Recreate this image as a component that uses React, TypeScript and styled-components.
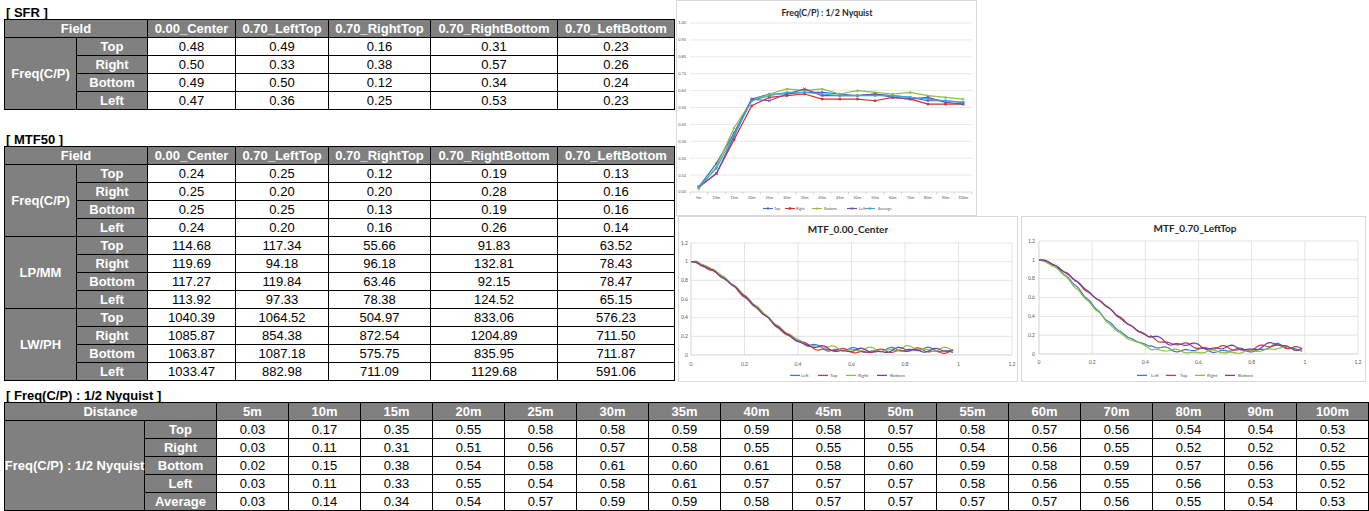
import React from "react";
import styled, { createGlobalStyle } from "styled-components";

const GlobalStyle = createGlobalStyle`
  html, body { margin: 0; padding: 0; background: #fff; }
  body { font-family: "Liberation Sans", Arial, sans-serif; }
`;

/* ---------- data ---------- */
const FIELDS = ["0.00_Center", "0.70_LeftTop", "0.70_RightTop", "0.70_RightBottom", "0.70_LeftBottom"];
const DIRS = ["Top", "Right", "Bottom", "Left"];

const SFR: string[][] = [
  ["0.48", "0.49", "0.16", "0.31", "0.23"],
  ["0.50", "0.33", "0.38", "0.57", "0.26"],
  ["0.49", "0.50", "0.12", "0.34", "0.24"],
  ["0.47", "0.36", "0.25", "0.53", "0.23"],
];

const MTF50: { group: string; rows: string[][] }[] = [
  {
    group: "Freq(C/P)",
    rows: [
      ["0.24", "0.25", "0.12", "0.19", "0.13"],
      ["0.25", "0.20", "0.20", "0.28", "0.16"],
      ["0.25", "0.25", "0.13", "0.19", "0.16"],
      ["0.24", "0.20", "0.16", "0.26", "0.14"],
    ],
  },
  {
    group: "LP/MM",
    rows: [
      ["114.68", "117.34", "55.66", "91.83", "63.52"],
      ["119.69", "94.18", "96.18", "132.81", "78.43"],
      ["117.27", "119.84", "63.46", "92.15", "78.47"],
      ["113.92", "97.33", "78.38", "124.52", "65.15"],
    ],
  },
  {
    group: "LW/PH",
    rows: [
      ["1040.39", "1064.52", "504.97", "833.06", "576.23"],
      ["1085.87", "854.38", "872.54", "1204.89", "711.50"],
      ["1063.87", "1087.18", "575.75", "835.95", "711.87"],
      ["1033.47", "882.98", "711.09", "1129.68", "591.06"],
    ],
  },
];

const DISTANCES = ["5m", "10m", "15m", "20m", "25m", "30m", "35m", "40m", "45m", "50m", "55m", "60m", "70m", "80m", "90m", "100m"];

const NYQ: { label: string; values: number[] }[] = [
  { label: "Top", values: [0.03, 0.17, 0.35, 0.55, 0.58, 0.58, 0.59, 0.59, 0.58, 0.57, 0.58, 0.57, 0.56, 0.54, 0.54, 0.53] },
  { label: "Right", values: [0.03, 0.11, 0.31, 0.51, 0.56, 0.57, 0.58, 0.55, 0.55, 0.55, 0.54, 0.56, 0.55, 0.52, 0.52, 0.52] },
  { label: "Bottom", values: [0.02, 0.15, 0.38, 0.54, 0.58, 0.61, 0.6, 0.61, 0.58, 0.6, 0.59, 0.58, 0.59, 0.57, 0.56, 0.55] },
  { label: "Left", values: [0.03, 0.11, 0.33, 0.55, 0.54, 0.58, 0.61, 0.57, 0.57, 0.57, 0.58, 0.56, 0.55, 0.56, 0.53, 0.52] },
  { label: "Average", values: [0.03, 0.14, 0.34, 0.54, 0.57, 0.59, 0.59, 0.58, 0.57, 0.57, 0.57, 0.57, 0.56, 0.55, 0.54, 0.53] },
];

/* ---------- layout ---------- */
const Page = styled.div`
  padding-left: 4px;
  width: 1365px;
`;

const TopSection = styled.div`
  display: flex;
  align-items: flex-start;
  height: 380px;
`;

const LeftColumn = styled.div`
  flex: none;
  width: 672px;
`;

const SectionTitle = styled.div<{ $space: number }>`
  box-sizing: border-box;
  height: ${(p) => p.$space}px;
  padding-left: 2px;
  display: flex;
  align-items: flex-end;
  font-size: 13px;
  font-weight: bold;
  line-height: 13px;
  color: #000;
  white-space: nowrap;
`;

const Grid = styled.div<{ $cols: string }>`
  display: grid;
  grid-template-columns: ${(p) => p.$cols};
  grid-auto-rows: 18px;
  width: max-content;
  border-top: 1px solid #000;
  border-left: 1px solid #000;
  font-size: 13px;
`;

const Cell = styled.div<{ $head?: boolean; $span?: number; $rows?: number }>`
  box-sizing: border-box;
  border-right: 1px solid #000;
  border-bottom: 1px solid #000;
  display: flex;
  align-items: center;
  justify-content: center;
  white-space: nowrap;
  line-height: 1;
  background: ${(p) => (p.$head ? "#808080" : "#fff")};
  color: ${(p) => (p.$head ? "#fff" : "#000")};
  font-weight: ${(p) => (p.$head ? "bold" : "normal")};
  grid-column: span ${(p) => p.$span ?? 1};
  grid-row: span ${(p) => p.$rows ?? 1};
`;

const ChartColumn = styled.div`
  display: flex;
  flex-direction: column;
`;

const ChartRow = styled.div`
  display: flex;
  gap: 3px;
  margin-left: 2px;
`;

const ChartFrame = styled.div<{ $w: number; $h: number }>`
  box-sizing: border-box;
  flex: none;
  width: ${(p) => p.$w}px;
  height: ${(p) => p.$h}px;
  border: 1px solid #d9d9d9;
  background: #fff;
`;

const ChartSvg = styled.svg`
  display: block;
  font-family: Lato, "Liberation Sans", sans-serif;
`;

/* ---------- tables ---------- */
const TOP_COLS = "72px 71px 88px 93px 102px 127px 117px";

function SfrTable() {
  return (
    <Grid $cols={TOP_COLS}>
      <Cell $head $span={2}>Field</Cell>
      {FIELDS.map((f) => (
        <Cell key={f} $head>{f}</Cell>
      ))}
      {SFR.map((row, i) => (
        <React.Fragment key={i}>
          {i === 0 && <Cell $head $rows={4}>Freq(C/P)</Cell>}
          <Cell $head>{DIRS[i]}</Cell>
          {row.map((v, j) => (
            <Cell key={j}>{v}</Cell>
          ))}
        </React.Fragment>
      ))}
    </Grid>
  );
}

function Mtf50Table() {
  return (
    <Grid $cols={TOP_COLS}>
      <Cell $head $span={2}>Field</Cell>
      {FIELDS.map((f) => (
        <Cell key={f} $head>{f}</Cell>
      ))}
      {MTF50.map((g) =>
        g.rows.map((row, i) => (
          <React.Fragment key={g.group + i}>
            {i === 0 && <Cell $head $rows={4}>{g.group}</Cell>}
            <Cell $head>{DIRS[i]}</Cell>
            {row.map((v, j) => (
              <Cell key={j}>{v}</Cell>
            ))}
          </React.Fragment>
        ))
      )}
    </Grid>
  );
}

function NyquistTable() {
  return (
    <Grid $cols={`140px 72px repeat(16, 72px)`}>
      <Cell $head $span={2}>Distance</Cell>
      {DISTANCES.map((d) => (
        <Cell key={d} $head>{d}</Cell>
      ))}
      {NYQ.map((s, i) => (
        <React.Fragment key={s.label}>
          {i === 0 && <Cell $head $rows={5}>Freq(C/P) : 1/2 Nyquist</Cell>}
          <Cell $head>{s.label}</Cell>
          {s.values.map((v, j) => (
            <Cell key={j}>{v.toFixed(2)}</Cell>
          ))}
        </React.Fragment>
      ))}
    </Grid>
  );
}

/* ---------- chart helpers ---------- */
const TXT = "#595959";
const GRIDC = "#d9d9d9";
const AXIS = "#bfbfbf";

type Marker = "diamond" | "square" | "triangle" | "x" | "star";

function MarkerShape({ kind, x, y, color }: { kind: Marker; x: number; y: number; color: string }) {
  const s = 1.5;
  switch (kind) {
    case "diamond":
      return <path d={`M${x} ${y - s}L${x + s} ${y}L${x} ${y + s}L${x - s} ${y}Z`} fill={color} />;
    case "square":
      return <rect x={x - 1.2} y={y - 1.2} width={2.4} height={2.4} fill={color} />;
    case "triangle":
      return <path d={`M${x} ${y - s}L${x + s} ${y + 1.1}L${x - s} ${y + 1.1}Z`} fill={color} />;
    case "x":
      return (
        <path d={`M${x - 1.3} ${y - 1.3}L${x + 1.3} ${y + 1.3}M${x + 1.3} ${y - 1.3}L${x - 1.3} ${y + 1.3}`} stroke={color} strokeWidth={0.8} />
      );
    default:
      return (
        <path
          d={`M${x - 1.4} ${y}L${x + 1.4} ${y}M${x} ${y - 1.4}L${x} ${y + 1.4}M${x - 1} ${y - 1}L${x + 1} ${y + 1}M${x + 1} ${y - 1}L${x - 1} ${y + 1}`}
          stroke={color}
          strokeWidth={0.7}
        />
      );
  }
}

const NYQ_STYLE: { color: string; marker: Marker }[] = [
  { color: "#3a6fc8", marker: "diamond" },
  { color: "#d0312d", marker: "square" },
  { color: "#8fbc3c", marker: "triangle" },
  { color: "#7b4aa8", marker: "x" },
  { color: "#36a8dc", marker: "star" },
];

function NyquistChart() {
  const L = 13;
  const R = 295;
  const y = (v: number) => 191 - 169 * v;
  const cw = (R - L) / 16;
  const cx = (i: number) => L + cw * (i + 0.5);
  const ticks = Array.from({ length: 11 }, (_, i) => i / 10);
  const legend = [
    { line: 86, text: 97 },
    { line: 108, text: 119 },
    { line: 135, text: 147 },
    { line: 170, text: 182 },
    { line: 188, text: 201 },
  ];
  return (
    <ChartSvg width={299} height={214} viewBox="0 0 299 214">
      <text x={150} y={14.5} textAnchor="middle" fontSize={8.8} fontWeight="bold" fill="#262626">
        Freq(C/P) : 1/2 Nyquist
      </text>
      {ticks.map((t) => (
        <g key={t}>
          <line x1={L} x2={R} y1={y(t)} y2={y(t)} stroke={t === 0 ? AXIS : GRIDC} strokeWidth={0.6} />
          <text x={9} y={y(t) + 1.4} textAnchor="end" fontSize={3.9} fill={TXT}>
            {t.toFixed(2)}
          </text>
        </g>
      ))}
      {Array.from({ length: 17 }, (_, i) => (
        <line key={i} x1={L + cw * i} x2={L + cw * i} y1={y(0)} y2={y(0) + 2.5} stroke={AXIS} strokeWidth={0.6} />
      ))}
      {DISTANCES.map((d, i) => (
        <text key={d} x={cx(i)} y={198} textAnchor="middle" fontSize={3.9} fill={TXT}>
          {d}
        </text>
      ))}
      {NYQ.map((s, si) => (
        <g key={s.label}>
          <polyline
            points={s.values.map((v, i) => `${cx(i)},${y(v)}`).join(" ")}
            fill="none"
            stroke={NYQ_STYLE[si].color}
            strokeWidth={1.2}
            strokeLinejoin="round"
          />
          {s.values.map((v, i) => (
            <MarkerShape key={i} kind={NYQ_STYLE[si].marker} x={cx(i)} y={y(v)} color={NYQ_STYLE[si].color} />
          ))}
        </g>
      ))}
      {NYQ.map((s, si) => (
        <g key={s.label}>
          <line x1={legend[si].line} x2={legend[si].line + 10} y1={207.5} y2={207.5} stroke={NYQ_STYLE[si].color} strokeWidth={1.1} />
          <MarkerShape kind={NYQ_STYLE[si].marker} x={legend[si].line + 5} y={207.5} color={NYQ_STYLE[si].color} />
          <text x={legend[si].text} y={209} fontSize={3.9} fill={TXT}>
            {s.label}
          </text>
        </g>
      ))}
    </ChartSvg>
  );
}

type Pt = [number, number];

function interp(ctrl: Pt[], x: number) {
  for (let i = 0; i < ctrl.length - 1; i++) {
    const [x0, y0] = ctrl[i];
    const [x1, y1] = ctrl[i + 1];
    if (x >= x0 && x <= x1) {
      const t = (x - x0) / (x1 - x0);
      const s = t * t * (3 - 2 * t);
      return y0 + (y1 - y0) * (0.5 * t + 0.5 * s);
    }
  }
  return ctrl[ctrl.length - 1][1];
}

function curve(ctrl: Pt[], seed: number, end: number, ampLo: number, ampHi: number): Pt[] {
  const pts: Pt[] = [];
  for (let k = 0; k <= Math.round(end / 0.005); k++) {
    const x = k * 0.005;
    let v = interp(ctrl, x);
    const amp = x < 0.06 ? 0 : x < 0.42 ? ampLo : ampHi;
    v += amp * (0.55 * Math.sin(x * 43 + seed) + 0.45 * Math.sin(x * 91 + seed * 2.3));
    pts.push([x, Math.max(0.004, v)]);
  }
  return pts;
}

const CENTER_BASE: Pt[] = [
  [0, 1], [0.02, 0.995], [0.04, 0.96], [0.08, 0.91], [0.12, 0.83], [0.16, 0.74], [0.2, 0.63],
  [0.24, 0.52], [0.28, 0.42], [0.32, 0.31], [0.36, 0.22], [0.4, 0.15], [0.44, 0.1], [0.48, 0.08],
  [0.52, 0.06], [0.56, 0.05], [0.6, 0.05], [0.7, 0.04], [0.8, 0.06], [0.9, 0.05], [0.98, 0.04],
];

const FAST: Pt[] = [
  [0, 1], [0.02, 0.99], [0.06, 0.93], [0.1, 0.83], [0.14, 0.71], [0.18, 0.58], [0.22, 0.46],
  [0.26, 0.34], [0.3, 0.24], [0.34, 0.16], [0.38, 0.12], [0.42, 0.07], [0.46, 0.05], [0.5, 0.04],
  [0.6, 0.03], [0.7, 0.03], [0.8, 0.03], [0.9, 0.08], [0.99, 0.04],
];

const SLOW: Pt[] = [
  [0, 1], [0.02, 0.99], [0.06, 0.94], [0.1, 0.86], [0.14, 0.77], [0.18, 0.67], [0.22, 0.58],
  [0.26, 0.49], [0.3, 0.39], [0.34, 0.31], [0.38, 0.23], [0.42, 0.17], [0.46, 0.15], [0.5, 0.11],
  [0.55, 0.09], [0.6, 0.08], [0.65, 0.06], [0.7, 0.06], [0.8, 0.05], [0.9, 0.1], [0.99, 0.04],
];

const shift = (c: Pt[], d: number): Pt[] => c.map(([x, v], i) => [x, i === 0 ? v : v + d]);

const MTF_COLORS = { Left: "#4178c8", Top: "#d03838", Right: "#8cbf3c", Bottom: "#7040a0" };

type Series = { name: keyof typeof MTF_COLORS; pts: Pt[] };

const CENTER_SERIES: Series[] = [
  { name: "Left", pts: curve(shift(CENTER_BASE, 0.004), 1.1, 0.98, 0.006, 0.028) },
  { name: "Top", pts: curve(shift(CENTER_BASE, -0.006), 2.7, 0.98, 0.006, 0.028) },
  { name: "Right", pts: curve(shift(CENTER_BASE, 0.012), 4.2, 0.98, 0.006, 0.03) },
  { name: "Bottom", pts: curve(CENTER_BASE, 5.6, 0.98, 0.006, 0.026) },
];

const LEFTTOP_SERIES: Series[] = [
  { name: "Left", pts: curve(shift(FAST, 0.008), 0.8, 0.99, 0.006, 0.026) },
  { name: "Top", pts: curve(SLOW, 3.3, 0.99, 0.006, 0.03) },
  { name: "Right", pts: curve(shift(FAST, -0.008), 4.9, 0.99, 0.006, 0.022) },
  { name: "Bottom", pts: curve(shift(SLOW, 0.006), 2.0, 0.99, 0.006, 0.03) },
];

type MtfProps = {
  w: number;
  h: number;
  title: string;
  titleX: number;
  titleY: number;
  L: number;
  T: number;
  B: number;
  R: number;
  yLabelX: number;
  xLabelY: number;
  legendY: number;
  legend: { line: number; text: number }[];
  series: Series[];
};

function MtfChart(p: MtfProps) {
  const sx = (v: number) => p.L + ((p.R - p.L) * v) / 1.2;
  const sy = (v: number) => p.B - ((p.B - p.T) * v) / 1.2;
  const steps = [0, 0.2, 0.4, 0.6, 0.8, 1, 1.2];
  const fmt = (v: number) => (v === 0 ? "0" : v === 1 ? "1" : String(Math.round(v * 10) / 10));
  return (
    <ChartSvg width={p.w} height={p.h} viewBox={`0 0 ${p.w} ${p.h}`}>
      <text x={p.titleX} y={p.titleY} textAnchor="middle" fontSize={10} fontWeight="bold" fill="#262626">
        {p.title}
      </text>
      {steps.map((s) => (
        <g key={s}>
          <line x1={p.L} x2={p.R} y1={sy(s)} y2={sy(s)} stroke={s === 0 ? AXIS : GRIDC} strokeWidth={0.7} />
          <line x1={sx(s)} x2={sx(s)} y1={p.T} y2={p.B} stroke={s === 0 ? AXIS : GRIDC} strokeWidth={0.7} />
          <text x={p.yLabelX} y={sy(s) + 1.8} textAnchor="end" fontSize={5} fill={TXT}>
            {fmt(s)}
          </text>
          <text x={sx(s)} y={p.xLabelY} textAnchor="middle" fontSize={5} fill={TXT}>
            {fmt(s)}
          </text>
        </g>
      ))}
      {p.series.map((s) => (
        <polyline
          key={s.name}
          points={s.pts.map(([x, v]) => `${sx(x).toFixed(2)},${sy(v).toFixed(2)}`).join(" ")}
          fill="none"
          stroke={MTF_COLORS[s.name]}
          strokeWidth={1.2}
          strokeLinejoin="round"
        />
      ))}
      {p.series.map((s, i) => (
        <g key={s.name}>
          <line
            x1={p.legend[i].line}
            x2={p.legend[i].line + 10}
            y1={p.legendY - 1.6}
            y2={p.legendY - 1.6}
            stroke={MTF_COLORS[s.name]}
            strokeWidth={1.3}
          />
          <text x={p.legend[i].text} y={p.legendY} fontSize={4.6} fill={TXT}>
            {s.name}
          </text>
        </g>
      ))}
    </ChartSvg>
  );
}

export default function App() {
  return (
    <>
      <GlobalStyle />
      <Page>
        <TopSection>
          <LeftColumn>
            <SectionTitle $space={19}>[ SFR ]</SectionTitle>
            <SfrTable />
            <SectionTitle $space={36}>[ MTF50 ]</SectionTitle>
            <Mtf50Table />
          </LeftColumn>
          <ChartColumn>
            <ChartFrame $w={301} $h={216}>
              <NyquistChart />
            </ChartFrame>
            <ChartRow>
              <ChartFrame $w={340} $h={166}>
                <MtfChart
                  w={338}
                  h={164}
                  title="MTF_0.00_Center"
                  titleX={169}
                  titleY={15.5}
                  L={12}
                  T={26}
                  B={138}
                  R={333}
                  yLabelX={9}
                  xLabelY={149}
                  legendY={160}
                  legend={[
                    { line: 111, text: 122 },
                    { line: 139, text: 151 },
                    { line: 167, text: 179 },
                    { line: 198, text: 211 },
                  ]}
                  series={CENTER_SERIES}
                />
              </ChartFrame>
              <ChartFrame $w={345} $h={166}>
                <MtfChart
                  w={343}
                  h={164}
                  title="MTF_0.70_LeftTop"
                  titleX={173}
                  titleY={14.5}
                  L={17}
                  T={24}
                  B={137}
                  R={336}
                  yLabelX={13}
                  xLabelY={147}
                  legendY={160}
                  legend={[
                    { line: 115, text: 129 },
                    { line: 144, text: 158 },
                    { line: 173, text: 185 },
                    { line: 203, text: 216 },
                  ]}
                  series={LEFTTOP_SERIES}
                />
              </ChartFrame>
            </ChartRow>
          </ChartColumn>
        </TopSection>
        <SectionTitle $space={22}>[ Freq(C/P) : 1/2 Nyquist ]</SectionTitle>
        <NyquistTable />
      </Page>
    </>
  );
}
